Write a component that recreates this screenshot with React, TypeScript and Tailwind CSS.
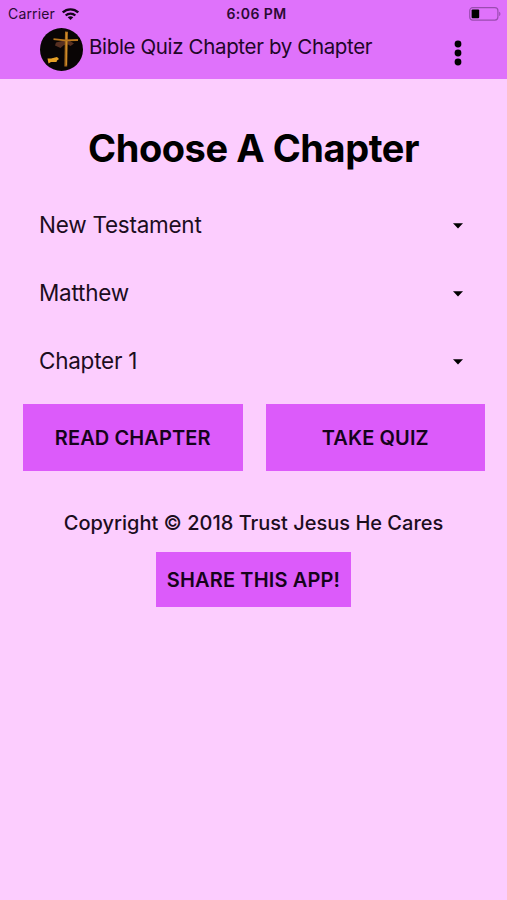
/**
 * Chapter picker screen of the Bible quiz app.
 */

const SELECTS = ["New Testament", "Matthew", "Chapter 1"];

/* Carrier, clock and battery row */
const StatusBar = () => (
  <div className="grid h-[27px] grid-cols-3 items-center pl-2 pr-[6px] text-[14px] leading-none">
    <div className="flex items-center gap-[7px]">
      <span className="tracking-[0.15px] text-[#2b0a35]">Carrier</span>
      <svg width="17" height="12" viewBox="0 0 17 12" fill="none" stroke="#150419" strokeWidth="2.4">
        <path d="M.8 4.500C5 .3 12 .3 16.200 4.500" />
        <path d="M3.700 7.500C6.300 5 10.700 5 13.300 7.500" />
        <path d="M8.500 12L5.700 9.300C7.400 8 9.600 8 11.300 9.300Z" fill="#150419" stroke="none" />
      </svg>
    </div>
    <span className="whitespace-nowrap pl-[4px] text-center font-semibold tracking-[0.45px] text-[#2b0a35]">6:06 PM</span>
    <svg className="justify-self-end" width="32" height="14" viewBox="0 0 32 14">
      <rect x=".7" y=".7" width="28.2" height="12.4" rx="3" fill="none" stroke="#9a4cb0" strokeWidth="1.2" />
      <rect x="2.6" y="2.5" width="7.6" height="8.8" rx="1" fill="#000" />
      <path d="M30.2 4.8C31.8 5.3 31.8 8.5 30.2 9Z" fill="#9a4cb0" />
    </svg>
  </div>
);

const Logo = () => (
  <svg className="mt-px shrink-0" width="43" height="43" viewBox="0 0 43 43">
    <circle cx="21.5" cy="21.5" r="21.5" fill="#090505" />
    <path d="M16 14.500L22 13H30L34 15.500L30.500 18L28 16.500L24 17L20.500 20L15 17.500Z" fill="#573022" />
    <path d="M25 3.500L28 3.800L27.200 38.500L24.400 38.500Z" fill="#a86b1d" />
    <path d="M26.500 4.500V37" stroke="#d8942b" strokeWidth=".8" />
    <path d="M13.500 11.200L25 12.400L38 12" fill="none" stroke="#b9771f" strokeWidth="1.800" />
    <path d="M7.500 30.500H11L17 29L19 31L17 32.500L16.500 34L11 34L8.500 35.500Z" fill="#e6a126" />
  </svg>
);

const Header = () => (
  <header className="h-[79px] bg-[#df72fb]">
    <StatusBar />
    <div className="flex h-[43px] items-center pl-10 pr-[45px]">
      <Logo />
      <h1 className="mb-[3px] ml-[6px] grow whitespace-nowrap text-[20.5px] leading-none tracking-[-0.35px] text-[#210628]">Bible Quiz Chapter by Chapter</h1>
      <button className="mt-[8px]" aria-label="Menu">
        <svg width="8" height="26" viewBox="0 0 8 26">
          <circle cx="4" cy="4" r="3.4" />
          <circle cx="4" cy="13" r="3.4" />
          <circle cx="4" cy="22" r="3.4" />
        </svg>
      </button>
    </div>
  </header>
);

const SelectRow = ({ label }: { label: string }) => (
  <button className="flex h-[68px] w-full items-center justify-between pl-[39px] pr-11 text-[22.5px] tracking-[-0.25px] text-[#1c0d1e]">
    <span>{label}</span>
    <svg className="mt-[2px]" width="10" height="6" viewBox="0 0 10 6">
      <path d="M0 .3H10L5 5.500Z" fill="#000" />
    </svg>
  </button>
);

const App = () => {
  return (
    <div className="h-[900px] w-[507px] overflow-hidden bg-[#fccdfe] font-['Inter',sans-serif]">
      <Header />
      <main className="flex flex-col items-center">
        <h2 className="mt-[46px] whitespace-nowrap text-[38px] font-bold leading-[46px] tracking-[-0.45px] text-black">Choose A Chapter</h2>
        <div className="mt-5 w-full">
          {SELECTS.map((label) => (
            <SelectRow key={label} label={label} />
          ))}
        </div>
        <div className="mt-[9px] flex w-full gap-[23px] pl-[23px] pr-[22px] text-[20px] font-semibold tracking-[0.1px] text-[#16031b]">
          <button className="h-[67px] flex-1 bg-[#dc5bfa] pt-px">READ CHAPTER</button>
          <button className="h-[67px] flex-1 bg-[#dc5bfa] pt-px">TAKE QUIZ</button>
        </div>
        <p className="mt-[38px] whitespace-nowrap text-[20px] font-medium leading-[28px] text-[#1c0d1e]">Copyright © 2018 Trust Jesus He Cares</p>
        <button className="mt-[15px] h-[55px] w-[195px] whitespace-nowrap bg-[#dc5bfa] pt-px text-[20px] font-semibold tracking-[0.15px] text-[#16031b]">SHARE THIS APP!</button>
      </main>
    </div>
  );
};

export default App;
